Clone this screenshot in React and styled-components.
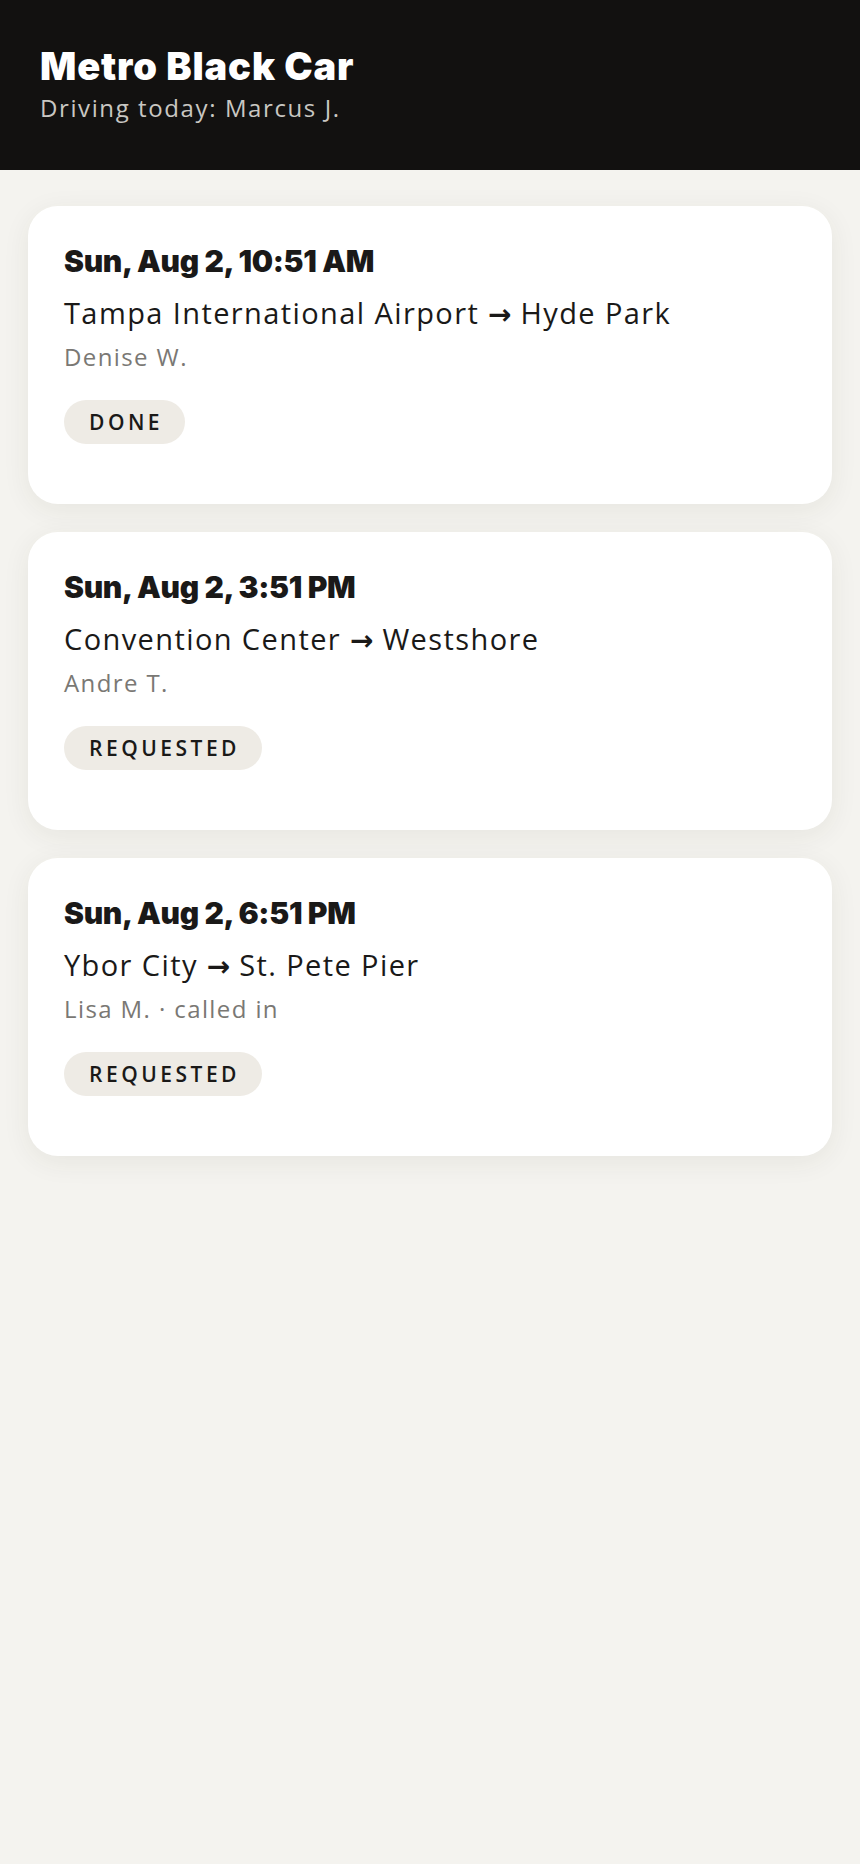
import React from 'react';
import styled, { createGlobalStyle } from 'styled-components';

const GlobalStyle = createGlobalStyle`
  html, body {
    margin: 0;
    padding: 0;
    background: #f4f3ef;
  }
  body {
    font-family: "Open Sans", "Liberation Sans", sans-serif;
    color: #1a1918;
    min-height: 1864px;
  }
`;

const Header = styled.header`
  background: #121110;
  height: 170px;
  box-sizing: border-box;
  padding: 43px 40px 0;
`;

const Title = styled.h1`
  margin: 0;
  font-family: Inter, "Liberation Sans", sans-serif;
  font-weight: 900;
  font-size: 38px;
  line-height: 46px;
  letter-spacing: 0.85px;
  color: #ffffff;
`;

const Subtitle = styled.div`
  margin-top: 4px;
  font-size: 24px;
  line-height: 30px;
  letter-spacing: 1.6px;
  color: #c9c7c2;
`;

const List = styled.main`
  display: flex;
  flex-direction: column;
  gap: 28px;
  padding: 36px 28px;
`;

const Card = styled.article`
  background: #ffffff;
  border-radius: 30px;
  padding: 36px 36px 60px;
  box-sizing: border-box;
  box-shadow: 0 6px 28px rgba(60, 50, 30, 0.07);
`;

const When = styled.h2`
  margin: 0;
  font-family: Inter, "Liberation Sans", sans-serif;
  font-weight: 900;
  font-size: 30px;
  line-height: 38px;
  letter-spacing: -0.3px;
  color: #1a1918;
`;

const Route = styled.div`
  margin-top: 14px;
  font-size: 29px;
  line-height: 38px;
  letter-spacing: 1.4px;
  color: #1a1918;
`;

const Arrow = styled.span`
  font-family: "DejaVu Sans", sans-serif;
  font-weight: 700;
  font-size: 28px;
  line-height: 1;
  letter-spacing: 0;
`;

const Meta = styled.div`
  margin-top: 10px;
  font-size: 24px;
  line-height: 30px;
  letter-spacing: 1.4px;
  color: #7a7874;
`;

const BadgeRow = styled.div`
  margin-top: 28px;
  display: flex;
`;

const Badge = styled.span`
  padding: 0 22px 0 25px;
  height: 44px;
  line-height: 44px;
  border-radius: 22px;
  background: #eeebe5;
  font-size: 21px;
  font-weight: 600;
  letter-spacing: 3.5px;
  color: #1a1918;
`;

const rides = [
  {
    when: 'Sun, Aug 2, 10:51 AM',
    from: 'Tampa International Airport',
    to: 'Hyde Park',
    meta: 'Denise W.',
    status: 'DONE',
  },
  {
    when: 'Sun, Aug 2, 3:51 PM',
    from: 'Convention Center',
    to: 'Westshore',
    meta: 'Andre T.',
    status: 'REQUESTED',
  },
  {
    when: 'Sun, Aug 2, 6:51 PM',
    from: 'Ybor City',
    to: 'St. Pete Pier',
    meta: 'Lisa M. · called in',
    status: 'REQUESTED',
  },
];

export default function App() {
  return (
    <>
      <GlobalStyle />
      <Header>
        <Title>Metro Black Car</Title>
        <Subtitle>Driving today: Marcus J.</Subtitle>
      </Header>
      <List>
        {rides.map((r) => (
          <Card key={r.when}>
            <When>{r.when}</When>
            <Route>
              {r.from} <Arrow>→</Arrow> {r.to}
            </Route>
            <Meta>{r.meta}</Meta>
            <BadgeRow>
              <Badge>{r.status}</Badge>
            </BadgeRow>
          </Card>
        ))}
      </List>
    </>
  );
}
